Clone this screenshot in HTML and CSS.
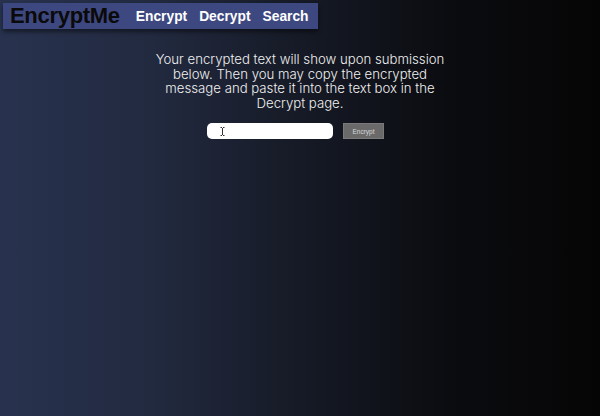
FILE: index.html
```html
<!DOCTYPE html>
<html>
<head>
<meta charset="utf-8">
<link rel="stylesheet" href="styles.css">
</head>
<body>
<nav class="navbar">
  <span class="brand">EncryptMe</span>
  <a class="nav-link" href="#">Encrypt</a>
  <a class="nav-link" href="#">Decrypt</a>
  <a class="nav-link" href="#">Search</a>
</nav>
<main class="main">
  <p class="intro">Your encrypted text will show upon submission below. Then you may copy the encrypted message and paste it into the text box in the Decrypt page.</p>
  <form class="form">
    <span class="input-wrap">
      <input class="text-input" type="text">
      <svg class="cursor" width="5" height="9" viewBox="0 0 5 9"><path d="M0.5 0.5h1.5M3 0.5h1.5M2.5 1v7M0.5 8.5h1.5M3 8.5h1.5" stroke="#333" stroke-width="1" fill="none"/></svg>
    </span>
    <button class="btn" type="button">Encrypt</button>
  </form>
</main>
</body>
</html>
```
FILE: styles.css
```css
html, body {
  margin: 0;
  height: 100%;
}
body {
  background: linear-gradient(to right, #28324e 0%, #222a40 25%, #161a26 50%, #0b0c10 75%, #050505 100%);
  font-family: "Liberation Sans", Arial, sans-serif;
  color: #fff;
  padding: 3px 0 0 3px;
  box-sizing: border-box;
}
.navbar {
  display: flex;
  align-items: center;
  width: 315px;
  height: 26px;
  box-sizing: border-box;
  padding: 0 0 0 7px;
  background: #3e4880;
  box-shadow: 0 3px 4px rgba(0,0,0,0.45);
}
.brand {
  font-size: 22px;
  font-weight: bold;
  color: #0a0a0a;
  letter-spacing: -0.3px;
  margin-right: 16px;
}
.nav-link {
  color: #fff;
  text-decoration: none;
  font-weight: bold;
  font-size: 13.8px;
  margin-right: 12px;
}
.main {
  display: flex;
  flex-direction: column;
  align-items: center;
  margin-left: -3px;
  padding-top: 23px;
}
.intro {
  width: 300px;
  margin: 0;
  text-align: center;
  font-family: Inter, "Liberation Sans", sans-serif;
  font-weight: 300;
  font-size: 13.2px;
  line-height: 14.5px;
  color: #f0f0f0;
}
.form {
  display: flex;
  align-items: center;
  gap: 10px;
  margin-top: 12px;
  margin-right: 9px;
}
.input-wrap {
  position: relative;
  display: flex;
}
.cursor {
  position: absolute;
  left: 13px;
  top: 4px;
}
.text-input {
  width: 126px;
  height: 16px;
  box-sizing: border-box;
  border: none;
  border-radius: 5px;
  background: #fff;
  margin: 0;
}
.btn {
  width: 41px;
  height: 16px;
  margin: 1px 0 0 0;
  padding: 0;
  border: 1px solid #7a7a7a;
  background: #6a6a6a;
  color: #d8d8d8;
  font-family: "Liberation Sans", sans-serif;
  font-size: 6.5px;
}
```
